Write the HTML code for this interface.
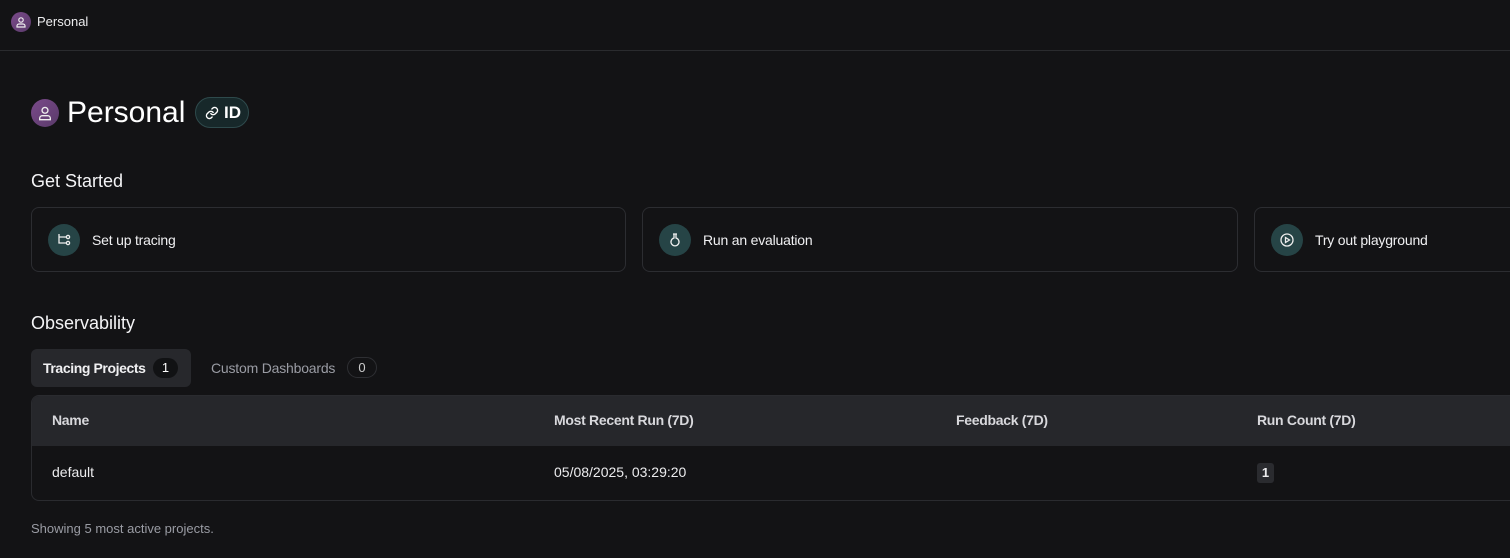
<html><head><style>
body{margin:0;width:1510px;height:558px;background:#131315;font-family:"Liberation Sans",sans-serif;color:#ececee;position:relative;overflow:hidden}
.a{position:absolute}
.av{border-radius:50%;background:linear-gradient(135deg,#7a4a8a,#5a3a6a);display:flex;align-items:center;justify-content:center}
.card{position:absolute;top:207px;height:65px;border:1px solid #2c2d31;border-radius:8px;box-sizing:border-box}
.ic{position:absolute;left:16px;top:16px;width:32px;height:32px;border-radius:50%;background:#264446;display:flex;align-items:center;justify-content:center}
.ct{position:absolute;left:60px;top:24px;font-size:14px;color:#f0f0f2;letter-spacing:-0.2px}
.th{position:absolute;top:412px;font-size:14px;font-weight:bold;color:#d8d8dc;letter-spacing:-0.3px}
</style></head><body>
<div class="a av" style="left:11px;top:12px;width:20px;height:20px"><svg width="12" height="12" viewBox="0 0 12 12" fill="none" stroke="#eee" stroke-width="1.2"><circle cx="6" cy="4" r="2.2"/><path d="M2 11v-1a2 2 0 0 1 2-2h4a2 2 0 0 1 2 2v1z"/></svg></div>
<div class="a" style="left:37px;top:14px;font-size:13px">Personal</div>
<div class="a" style="left:0;top:50px;width:1510px;height:1px;background:#2a2b2e"></div>
<div class="a av" style="left:31px;top:99px;width:28px;height:28px"><svg width="16" height="16" viewBox="0 0 12 12" fill="none" stroke="#eee" stroke-width="1"><circle cx="6" cy="4" r="2.2"/><path d="M2 11v-1a2 2 0 0 1 2-2h4a2 2 0 0 1 2 2v1z"/></svg></div>
<div class="a" style="left:67px;top:96px;font-size:30px;color:#fff">Personal</div>
<div class="a" style="left:195px;top:97px;width:54px;height:31px;border:1px solid #2e4a4c;border-radius:16px;background:#17282a;box-sizing:border-box"><svg class="a" style="left:9px;top:8px" width="14" height="14" viewBox="0 0 24 24" fill="none" stroke="#fff" stroke-width="2.4" stroke-linecap="round"><path d="M10 13a5 5 0 0 0 7.5.5l3-3a5 5 0 0 0-7-7l-1.7 1.7"/><path d="M14 11a5 5 0 0 0-7.5-.5l-3 3a5 5 0 0 0 7 7l1.7-1.7"/></svg><span class="a" style="left:28px;top:5px;font-size:17px;font-weight:bold;color:#fff">ID</span></div>
<div class="a" style="left:31px;top:171px;font-size:18px;color:#f4f4f6">Get Started</div>
<div class="card" style="left:31px;width:595px"><div class="ic"><svg width="16" height="16" viewBox="0 0 16 16" fill="none" stroke="#eee" stroke-width="1.3"><path d="M3 2v9h7M3 5h7"/><circle cx="12" cy="5" r="1.6"/><circle cx="12" cy="11" r="1.6"/></svg></div><div class="ct">Set up tracing</div></div>
<div class="card" style="left:642px;width:596px"><div class="ic"><svg width="16" height="16" viewBox="0 0 16 16" fill="none" stroke="#eee" stroke-width="1.3"><path d="M6 2h4M7 2v4a4 4 0 1 0 2 0V2"/></svg></div><div class="ct">Run an evaluation</div></div>
<div class="card" style="left:1254px;width:300px"><div class="ic"><svg width="16" height="16" viewBox="0 0 16 16" fill="none" stroke="#eee" stroke-width="1.3"><circle cx="8" cy="8" r="6"/><path d="M6.5 5.5v5l4-2.5z"/></svg></div><div class="ct">Try out playground</div></div>
<div class="a" style="left:31px;top:313px;font-size:18px;color:#f4f4f6">Observability</div>
<div class="a" style="left:31px;top:349px;width:160px;height:38px;background:#27282c;border-radius:6px"></div>
<div class="a" style="left:43px;top:360px;font-size:14px;font-weight:bold;color:#f0f0f2;letter-spacing:-0.4px">Tracing Projects</div>
<div class="a" style="left:153px;top:358px;width:25px;height:20px;border-radius:10px;background:#111214;font-size:13px;text-align:center;line-height:20px;color:#fff">1</div>
<div class="a" style="left:211px;top:360px;font-size:14px;color:#9a9ca4;letter-spacing:-0.2px">Custom Dashboards</div>
<div class="a" style="left:347px;top:357px;width:30px;height:21px;border-radius:11px;border:1px solid #2e2f33;box-sizing:border-box;font-size:13px;text-align:center;line-height:19px;color:#ccc">0</div>
<div class="a" style="left:31px;top:395px;width:1520px;height:106px;border:1px solid #2a2b2f;border-radius:8px;box-sizing:border-box;overflow:hidden"><div style="height:50px;background:#26272b"></div></div>
<div class="th" style="left:52px">Name</div>
<div class="th" style="left:554px">Most Recent Run (7D)</div>
<div class="th" style="left:956px">Feedback (7D)</div>
<div class="th" style="left:1257px">Run Count (7D)</div>
<div class="a" style="left:52px;top:464px;font-size:14px">default</div>
<div class="a" style="left:554px;top:464px;font-size:14px">05/08/2025, 03:29:20</div>
<div class="a" style="left:1257px;top:463px;width:17px;height:20px;background:#2a2b2f;border-radius:3px;font-size:13px;font-weight:bold;text-align:center;line-height:20px">1</div>
<div class="a" style="left:31px;top:521px;font-size:13px;color:#9a9ca4">Showing 5 most active projects.</div>
</body></html>
